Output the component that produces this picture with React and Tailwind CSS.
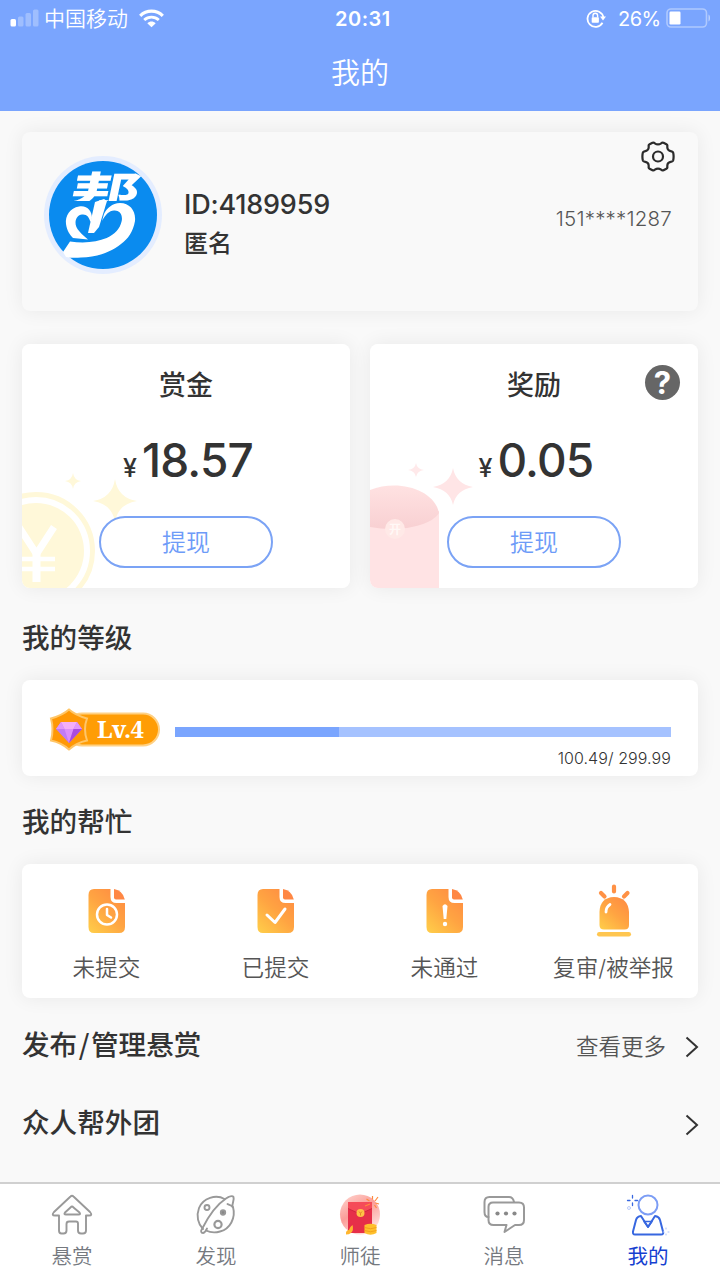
const SANS = "font-['Inter','Noto_Sans_CJK_SC',sans-serif]";
const CJK = "font-['Noto_Sans_CJK_SC',sans-serif]";
const CARD = "shadow-[0_0_20px_rgba(0,0,0,0.07)] rounded-[8px]";

function StatusBar() {
  return (
    <div className="flex h-[37px] items-center text-white">
      <svg className="ml-[10px] shrink-0" width="29" height="19" viewBox="0 0 29 19" fill="#fff">
        <rect x="0.5" y="10" width="5.5" height="7.5" rx="1.5" />
        <g opacity="0.28">
          <rect x="8" y="7.5" width="5.5" height="10" rx="1.5" />
          <rect x="15.5" y="4" width="5.5" height="13.5" rx="1.5" />
          <rect x="23" y="0.5" width="5.5" height="17" rx="1.5" />
        </g>
      </svg>
      <span className="ml-[5px] w-[84px] text-[21px] font-[350] leading-[37px] whitespace-nowrap">中国移动</span>
      <svg className="ml-[11px] shrink-0" width="25" height="19" viewBox="0 0 25 19" fill="none" stroke="#fff">
        <path d="M1.2 6.8C7.6.6 17.4.6 23.8 6.8" strokeWidth="3.2" />
        <path d="M5.2 11C9.3 7.1 15.7 7.1 19.8 11" strokeWidth="2.8" />
        <path d="M8.3 14.2c2.4-2.2 6-2.2 8.4 0L12.500 18.2z" fill="#fff" stroke="none" />
      </svg>
      <span className="ml-[171px] w-[60px] text-[20px] font-semibold tracking-[0.5px]">20:31</span>
      <svg className="ml-[191px] shrink-0" width="20" height="19" viewBox="0 0 20 19" fill="none" stroke="#fff">
        <path d="M16.5 13.8A8 8 0 1 1 17.4 8.5" strokeWidth="1.8" />
        <path d="M14 7.6h6l-3 4z" fill="#fff" stroke="none" />
        <rect x="5.7" y="8.2" width="7.2" height="5.6" rx="0.8" fill="#fff" stroke="none" />
        <path d="M7 8.5V6.6a2.3 2.3 0 0 1 4.6 0v1.9" strokeWidth="1.4" />
      </svg>
      <span className="ml-[12px] w-[48px] text-[20px] tracking-[-0.5px]">26%</span>
      <svg className="-mt-[2px] shrink-0" width="46" height="20" viewBox="0 0 46 20">
        <rect x="1" y="1" width="39.5" height="18" rx="4" fill="none" stroke="#fff" strokeOpacity="0.4" strokeWidth="1.6" />
        <rect x="3.5" y="3.5" width="11" height="13" rx="1.2" fill="#fff" />
        <path d="M42.5 6.5c2 .8 2 6.2 0 7z" fill="#fff" fillOpacity="0.5" />
      </svg>
    </div>
  );
}

function Avatar() {
  return (
    <svg className="mt-[24px] ml-[22px] shrink-0" width="118" height="118" viewBox="0 0 118 118">
      <circle cx="59" cy="59" r="59" fill="#e4edff" />
      <circle cx="59" cy="59" r="54" fill="#0a8bef" />
      <text transform="translate(21 64) skewX(-12) scale(1.22 1)" fontSize="57" fontWeight="700" fill="#fff" className="font-['Noto_Sans_CJK_SC',sans-serif]">帮</text>
      <path d="M15 45H103V85H15z" fill="#0a8bef" />
      <g fill="#fff">
        <path d="M48 62C48 55 43 49 35 50.500C26 52 21 60 22 68C23 75 26 79 29 82L44 83.500C38 78 31 73 31.500 66C32 62 34 59 38 58.500C43 58 45 61 46.500 66Z" />
        <path d="M51 46L60 43L63 45L55 71L50 77H44Z" />
        <path d="M60 58C63 52 68 47.500 76 47C86 47 92 55 91 65C89 76 84 83 77 88C66 97 52 101 37 101.500C32 102 26 102 22 101L19 96L26 85.500C41 87.500 53 86 62.700 82C71 78 76 73 77.700 65C79 58 75 54 70 54.500C65 55 62 58 58 65Z" />
      </g>
    </svg>
  );
}

function Gear() {
  return (
    <svg width="34" height="31" viewBox="0 0 34 31" fill="none" stroke="#2b2b2b" strokeWidth="2.200" strokeLinejoin="round">
      <path d="M11.500 1.700Q12.800 1.200 13.800 2.300Q17 4.400 20.200 2.300Q21.200 1.200 22.500 1.700L25.400 3.300Q26.700 4 26.300 5.500Q26 9.600 30.400 10.300Q31.900 10.600 32.200 11.800Q33 15.500 32.200 19.200Q31.900 20.400 30.400 20.700Q26 21.400 26.300 25.500Q26.700 27 25.400 27.700L22.500 29.300Q21.200 29.800 20.200 28.700Q17 26.600 13.800 28.700Q12.800 29.800 11.500 29.300L8.600 27.700Q7.300 27 7.700 25.500Q8 21.400 3.600 20.700Q2.100 20.400 1.800 19.200Q1 15.500 1.800 11.800Q2.100 10.600 3.600 10.300Q8 9.600 7.700 5.500Q7.300 4 8.600 3.300Z" />
      <circle cx="17" cy="15.500" r="5" />
    </svg>
  );
}

function Coin() {
  return (
    <svg className="absolute bottom-0 left-0" width="120" height="115" viewBox="0 0 120 115">
      <g fill="#fff8d9">
        <circle cx="14" cy="78" r="48" />
        <circle cx="14" cy="78" r="56.500" fill="none" stroke="#fff8d9" strokeWidth="5" />
        <path d="M93 6Q96 25 115 28Q96 31 93 49Q90 31 71 28Q90 25 93 6Z" />
        <path d="M51 0Q52 7 59 8Q52 9 51 16Q50 9 43 8Q50 7 51 0Z" />
      </g>
      <path d="M-3 54L14.500 81L32 54" fill="none" stroke="#fff" strokeWidth="7" />
      <path d="M14.500 80V109" stroke="#fff" strokeWidth="8" />
      <path d="M0 86H33M0 96H33" stroke="#fff" strokeWidth="4.500" />
    </svg>
  );
}

function Envelope() {
  return (
    <svg className="absolute bottom-0 left-0" width="110" height="125" viewBox="0 0 110 125">
      <defs>
        <linearGradient id="flap" x1="0" y1="0" x2="0" y2="1">
          <stop offset="0" stopColor="#ffe2e2" /><stop offset="1" stopColor="#f8d0d2" />
        </linearGradient>
      </defs>
      <path d="M0 48H69V125H0z" fill="#ffe3e4" />
      <path d="M0 27C28 16 64 26 69 50C60 64 28 69 0 64Z" fill="url(#flap)" />
      <circle cx="25" cy="66" r="10" fill="#ffe9e7" />
      <text x="25" y="71" textAnchor="middle" fontSize="12" fontWeight="700" fill="#fff8f6">开</text>
      <path d="M83 5Q86 21 103 24Q86 27 83 42Q80 27 63 24Q80 21 83 5Z" fill="#ffe5e6" />
      <path d="M46 0Q47 6 54 7Q47 8 46 14Q45 8 38 7Q45 6 46 0Z" fill="#ffe9ea" />
    </svg>
  );
}

function MoneyCard({ title, amount, art, help }) {
  return (
    <div className="relative flex h-[244px] flex-1 flex-col items-center overflow-hidden rounded-[8px] bg-white">
      {art}
      <div className="mt-[22px] text-[27px] leading-[40px] font-medium">{title}</div>
      <div className="mt-[25px] flex h-[58px] items-baseline pl-[4px]">
        <span className="mr-[5px] text-[25px] font-medium">¥</span>
        <span className="text-[46px] leading-[58px] font-medium tracking-[-0.800px]">{amount}</span>
      </div>
      <button className="relative mt-[27px] h-[52px] w-[174px] rounded-full border-2 border-[#7ba3f5] pt-[2px] text-[24px] leading-[46px] font-[350] text-[#6d9bf8]">提现</button>
      {help && (
        <span className="absolute top-[21px] right-[18px] flex size-[35px] items-center justify-center rounded-full bg-[#666] pt-px text-[31px] font-bold text-white">?</span>
      )}
    </div>
  );
}

function LevelBadge() {
  return (
    <svg className="mt-[27px] ml-[27px] shrink-0" width="112" height="46" viewBox="0 0 112 46">
      <rect x="17" y="6.500" width="93" height="32" rx="16" fill="#ff9d05" stroke="#ffd184" strokeWidth="2" />
      <path d="M20 2.500C25 7 31 9.500 38 11.500Q34 22 38 33.500C31 35 25 38 20 42.500C15 38 9 35 2 33.500Q5 22 2 11.500C9 9.500 15 7 20 2.500Z" fill="#ff9805" stroke="#ffc668" strokeWidth="2" />
      <path d="M12 15H28L33 22L20 36L7 22Z" fill="#c17bf4" />
      <path d="M12 15H28L24.500 22H15.500Z" fill="#f4aef8" />
      <path d="M7 22L12 15L15.500 22Z" fill="#e197fa" /><path d="M33 22L28 15L24.500 22Z" fill="#e197fa" />
      <path d="M15.500 22H24.500L20 36Z" fill="#dc8ff8" /><path d="M24.500 22H33L20 36Z" fill="#a94bdf" />
      <text x="48" y="31" fontSize="24" fontWeight="700" fill="#fff" textLength="47" className="font-['Noto_Serif','Liberation_Serif',serif]">Lv.4</text>
    </svg>
  );
}

function Orange() {
  return (
    <defs>
      <linearGradient id="orange" x1="0.9" y1="0" x2="0.1" y2="1">
        <stop offset="0" stopColor="#ff8a42" /><stop offset="0.5" stopColor="#ffa442" /><stop offset="1" stopColor="#ffcb49" />
      </linearGradient>
    </defs>
  );
}

function Doc({ children }) {
  return (
    <svg width="38" height="56" viewBox="0 0 38 56" fill="none">
      <Orange />
      <path d="M6 7H22.500V15Q22.500 21 28.500 21H37V45Q37 51 31 51H6Q.5 51 .5 45V13Q.5 7 6 7Z" fill="url(#orange)" />
      <path d="M26 7Q35 8.500 36.800 17.500H28Q26 17.500 26 15.500Z" fill="#ff8744" />
      <g stroke="#fff" strokeWidth="2.500" strokeLinecap="round" strokeLinejoin="round">{children}</g>
    </svg>
  );
}

function Siren() {
  return (
    <svg width="38" height="56" viewBox="0 0 38 56" fill="none">
      <Orange />
      <path d="M4.500 30Q5 15.500 19 15Q33 15.500 34 30V43Q34 47.500 29.500 47.500H9Q4.500 47.500 4.500 43Z" fill="url(#orange)" />
      <path d="M11 30Q11 25 15 22.500" stroke="#fff" strokeWidth="2.800" strokeLinecap="round" />
      <path d="M19 4.500V9.500M6 11L9.500 14.500M32.500 11L29 14.500" stroke="#ff9145" strokeWidth="4.200" strokeLinecap="round" />
      <rect x="2" y="50" width="34" height="4.500" rx="2.200" fill="#ffc650" />
    </svg>
  );
}

const HELP = [
  ["未提交", <Doc><circle cx="19" cy="32.500" r="10" /><path d="M19 27V33L23 35.500" /></Doc>],
  ["已提交", <Doc><path d="M10 33L18 40.500L28 27" strokeWidth="3" /></Doc>],
  ["未通过", <Doc><path d="M16.500 24Q19 20.500 21.500 24L20.300 37H17.700Z" fill="#fff" stroke="none" /><circle cx="19" cy="42" r="2.200" fill="#fff" stroke="none" /></Doc>],
  ["复审/被举报", <Siren />],
];

function LinkRow({ title, more }) {
  return (
    <div className={`flex h-[78px] items-center justify-between pr-[20px] pl-[22px] ${CJK}`}>
      <span className="-mt-[2px] text-[27.600px] font-medium">{title}</span>
      <span className="flex items-center text-[22.500px] font-[350] text-[#555]">
        <span className="pt-px">{more}</span>
        <svg className="mt-[3px] ml-[18px]" width="16" height="22" viewBox="0 0 16 22" fill="none" stroke="#333" strokeWidth="2"><path d="M2.500 1.500L13 11L2.500 20.500" /></svg>
      </span>
    </div>
  );
}

const ICON = { width: 44, height: 44, viewBox: "0 0 44 44", fill: "none", stroke: "#999", strokeWidth: 1.9, strokeLinejoin: "round", strokeLinecap: "round" };

function HomeIcon() {
  return (
    <svg {...ICON}>
      <path d="M20.500 3.500Q22 2 23.500 3.500L40 19Q43 22.500 39 22.500H36V37.500Q36 40.500 33 40.500H31Q28 40.500 28 37.500V30.500Q28 28.500 26 28.500H19Q16.500 28.500 16.500 31V37.500Q16.500 40.500 13.500 40.500H11.500Q9 40.500 9 37.500V22.500H5Q1 22.500 4 19Z" />
      <path d="M20.500 14.500Q22 12.500 23.500 14.500L29.500 19.500Q31 21.500 28.500 21.500H16Q13.500 21.500 15 19.500Z" />
    </svg>
  );
}

function DiscoverIcon() {
  return (
    <svg {...ICON}>
      <path d="M30.500 6C22 1 9 5 5 15C2 23 4 31 9 36M39 14C42 25 36 36 26 38.500C21 40 16 39.500 12 37.500" />
      <path d="M8 36C13 26 22 12 32 5.500C35 3.500 38.500 2.500 39.500 4C40.500 7 38 10 38.500 14C38 12 35 12 33.500 11M8 36C6.500 38 7 40 9 40C11 40 12 37.500 13 35.500" />
      <circle cx="13" cy="14.500" r="2.500" /><circle cx="24" cy="31.500" r="3.600" strokeWidth="2.200" /><circle cx="29" cy="19.500" r="2.200" fill="#888" />
    </svg>
  );
}

function RedIcon() {
  return (
    <svg width="44" height="44" viewBox="0 0 44 44">
      <defs>
        <linearGradient id="glow" x1="0" y1="0" x2="0.6" y2="1">
          <stop offset="0" stopColor="#ffd9d2" /><stop offset="0.5" stopColor="#fb9d99" /><stop offset="1" stopColor="#ffe0dc" />
        </linearGradient>
      </defs>
      <circle cx="22" cy="21.500" r="20" fill="url(#glow)" />
      <path d="M10 9H34V38Q34 40 32 40H12Q10 40 10 38Z" fill="#e62f49" />
      <path d="M10 9H34V15.500L22 21L10 15.500Z" fill="#f54b58" />
      <path d="M10 15.500L22 21L34 15.500" fill="none" stroke="#c9213b" strokeWidth="0.8" />
      <circle cx="22.500" cy="20" r="4" fill="#ffc247" />
      <path d="M21 18.500L22.500 20.300L24 18.500M22.500 20.300V22.500" fill="none" stroke="#d97a1a" strokeWidth="0.8" />
      <path d="M8 41.500Q7.500 37 11 37Q11.500 34 14.500 32Q16 37 13 40Q11 41.500 8 41.500Z" fill="#ffb62e" />
      <path d="M26.500 32Q32.500 29.500 38.500 32V40Q32.500 43.500 26.500 40Z" fill="#ffc02c" />
      <path d="M26.500 34.500Q32.500 37 38.500 34.500M26.500 37.500Q32.500 40 38.500 37.500" fill="none" stroke="#ef9a16" strokeWidth="0.8" />
      <path d="M34.500 6.500V3M37 8L40 4M31.500 8L28.500 6M37.500 10L41 11M32 11L27 13M36.500 12L38.500 15" stroke="#ff8b3e" strokeWidth="1.200" />
    </svg>
  );
}

function MessageIcon() {
  return (
    <svg {...ICON} strokeWidth="2">
      <path d="M6.500 24Q2.500 24 2.500 19V9Q2.500 4 7.500 4H27Q31 4 32 9" />
      <path d="M11 9.500H37Q42 9.500 42 14.500V27Q42 32 37 32H33L22.500 39L24.500 32H11.500Q6.500 32 6.500 27V14Q6.500 9.500 11 9.500Z" />
      <g fill="#888" stroke="none"><circle cx="15.500" cy="20.500" r="2.100" /><circle cx="24" cy="20.500" r="2.100" /><circle cx="32.500" cy="20.500" r="2.100" /></g>
    </svg>
  );
}

function MineIcon() {
  return (
    <svg {...ICON} stroke="#3767e0" strokeWidth="2">
      <circle cx="22" cy="12" r="9.500" stroke="#7c9df5" />
      <path d="M15 23Q11 23.500 10 27L7 38.500Q6.500 41.500 9 41.500H35Q38 41.500 37 38.500L34 27Q33 23.500 29 23L22 34Z" />
      <path d="M18 28.500H26L22 34Z" strokeWidth="1.500" />
      <path d="M6.500 2.500V5M6.500 10V12.500M1.500 7.500H4M9 7.500H11.500" strokeWidth="1.300" />
      <circle cx="3" cy="15" r="1.500" stroke="#bccdfb" strokeWidth="1" />
      <path d="M40 35V36M40 41V42M37 39H38M42 39H43" stroke="#a9bffa" strokeWidth="1" />
    </svg>
  );
}

const TABS = [
  ["悬赏", <HomeIcon />],
  ["发现", <DiscoverIcon />],
  ["师徒", <RedIcon />],
  ["消息", <MessageIcon />],
  ["我的", <MineIcon />],
];

export default function App() {
  return (
    <div className={`flex h-[1280px] w-[720px] flex-col overflow-hidden bg-[#f9f9f9] text-[#333] ${SANS}`}>
      <header className="h-[111px] shrink-0 bg-[#7aa5fe]">
        <StatusBar />
        <h1 className="pt-[2px] text-center text-[29px] leading-[70px] font-[350] text-white">我的</h1>
      </header>

      <section className={`mx-[22px] mt-[21px] flex h-[179px] shrink-0 bg-[#f9f9f9] ${CARD}`}>
        <Avatar />
        <div className="mt-[53px] ml-[22px] font-medium">
          <div className="text-[27px] leading-[40px] tracking-[-0.200px]">ID:4189959</div>
          <div className="text-[24px] leading-[37px]">匿名</div>
        </div>
        <div className="ml-auto flex flex-col items-end pt-[9px] pr-[23px]">
          <Gear />
          <div className="mt-[32px] mr-[3px] text-[20.500px] leading-[30px] font-[350] tracking-[0.200px] text-[#555]">151****1287</div>
        </div>
      </section>

      <section className="mx-[22px] mt-[33px] flex shrink-0 gap-[20px]">
        <div className={`flex flex-1 ${CARD}`}><MoneyCard title="赏金" amount="18.57" art={<Coin />} /></div>
        <div className={`flex flex-1 ${CARD}`}><MoneyCard title="奖励" amount="0.05" art={<Envelope />} help /></div>
      </section>

      <h2 className="mt-[30px] ml-[22px] text-[27.600px] leading-[40px] font-medium">我的等级</h2>
      <section className={`mx-[22px] mt-[22px] flex h-[96px] shrink-0 bg-white ${CARD}`}>
        <LevelBadge />
        <div className="mt-[47px] mr-[27px] ml-[14px] flex-1">
          <div className="h-[10px] bg-[#a5c2ff]"><div className="h-full w-[33.100%] bg-[#7aa5fe]" /></div>
          <div className="mt-[9px] text-right text-[16px] leading-[24px] font-[350] tracking-[0.080px] text-[#333]">100.49/ 299.99</div>
        </div>
      </section>

      <h2 className="mt-[26px] ml-[22px] text-[27.600px] leading-[40px] font-medium">我的帮忙</h2>
      <section className={`mx-[22px] mt-[22px] flex h-[134px] shrink-0 bg-white ${CARD}`}>
        {HELP.map(([label, icon]) => (
          <div key={label} className="flex flex-1 flex-col items-center pt-[18px]">
            {icon}
            <span className="mt-[13px] text-[22.600px] leading-[34px] font-[350] whitespace-nowrap text-[#555]">{label}</span>
          </div>
        ))}
      </section>

      <div className="mt-[8px] shrink-0">
        <LinkRow title={<>发布<span className="mx-[1.500px]">/</span>管理悬赏</>} more="查看更多" />
        <LinkRow title="众人帮外团" />
      </div>

      <nav className={`mt-auto flex h-[98px] shrink-0 border-t-2 border-[#d0d0d0] bg-white ${CJK}`}>
        {TABS.map(([label, icon]) => (
          <div key={label} className={`flex flex-1 flex-col items-center pt-[9px] text-[20.500px] leading-[30px] ${label === "我的" ? "text-[#1440d0]" : "font-[350] text-[#75797f]"}`}>
            {icon}
            <span className="mt-[3px]">{label}</span>
          </div>
        ))}
      </nav>
    </div>
  );
}
